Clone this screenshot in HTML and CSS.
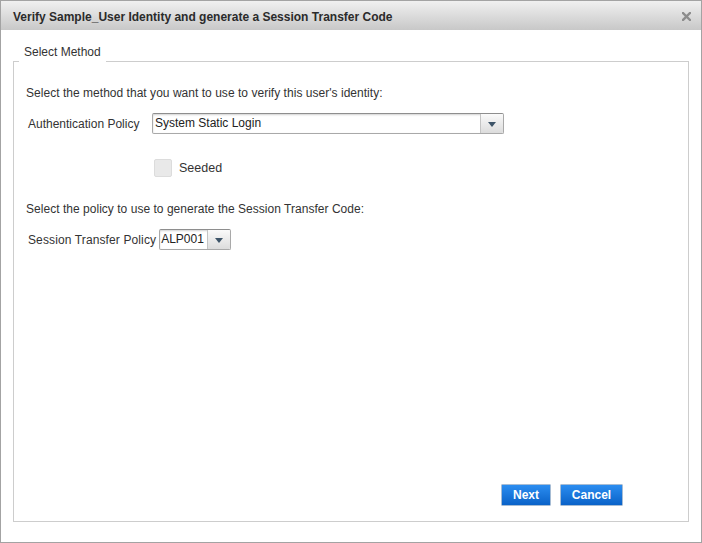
FILE: index.html
```html
<!DOCTYPE html>
<html>
<head>
<meta charset="utf-8">
<link rel="stylesheet" href="styles.css">
</head>
<body>
<div class="dialog">
  <div class="header">
    <span class="title">Verify Sample_User Identity and generate a Session Transfer Code</span>
    <svg class="close" width="9" height="9" viewBox="0 0 9 9"><path d="M1 1L8 8M8 1L1 8" stroke="#8c8c8c" stroke-width="2.4" stroke-linecap="square"/></svg>
  </div>
  <div class="tabs">
    <div class="tab">Select Method</div>
  </div>
  <div class="panel">
    <div class="text">Select the method that you want to use to verify this user's identity:</div>
    <div class="row">
      <span class="label label-wide">Authentication Policy</span>
      <div class="select select-wide">
        <span class="select-value">System Static Login</span>
        <span class="select-btn"><svg width="8" height="5" viewBox="0 0 8 5"><path d="M0 0H8L4 5Z" fill="#3d5468"/></svg></span>
      </div>
    </div>
    <div class="check-row">
      <span class="checkbox"></span>
      <span class="check-label">Seeded</span>
    </div>
    <div class="text text-second">Select the policy to use to generate the Session Transfer Code:</div>
    <div class="row">
      <span class="label label-narrow">Session Transfer Policy</span>
      <div class="select select-small">
        <span class="select-value">ALP001</span>
        <span class="select-btn"><svg width="8" height="5" viewBox="0 0 8 5"><path d="M0 0H8L4 5Z" fill="#3d5468"/></svg></span>
      </div>
    </div>
    <div class="buttons">
      <button class="btn btn-next">Next</button>
      <button class="btn btn-cancel">Cancel</button>
    </div>
  </div>
</div>
</body>
</html>
```
FILE: styles.css
```css
* { box-sizing: border-box; }
html, body { margin: 0; padding: 0; background: #fff; }
body {
  font-family: "Liberation Sans", Arial, sans-serif;
  font-size: 12px;
  color: #333;
}
.dialog {
  width: 702px;
  height: 543px;
  border: 1px solid #a3a3a3;
  display: flex;
  flex-direction: column;
  padding-bottom: 20px;
}
.header {
  height: 29px;
  flex: none;
  display: flex;
  align-items: center;
  justify-content: space-between;
  padding: 0 10px 0 12px;
  background: linear-gradient(#f0f0f0, #c8c8c8);
}
.title {
  font-weight: bold;
  font-size: 12px;
  color: #2b2b2b;
  margin-top: 2px;
}
.close { display: block; margin-top: 1px; }
.tabs {
  flex: none;
  display: flex;
  padding: 12px 12px 0 18px;
}
.tab {
  position: relative;
  height: 20px;
  line-height: 20px;
  padding: 0 5px;
  margin-bottom: -1px;
  background: #fff;
  color: #333;
  z-index: 1;
}
.panel {
  flex: 1;
  margin: 0 12px;
  border: 1px solid #cdcdcd;
  display: flex;
  flex-direction: column;
  padding: 23px 0 15px 12px;
}
.text { line-height: 16px; letter-spacing: 0.03px; }
.text-second { margin-top: 24px; }
.row {
  display: flex;
  align-items: center;
  margin-top: 12px;
  padding-left: 2px;
}
.label { line-height: 16px; }
.label-wide { width: 124px; }
.label-narrow { margin-right: 3px; letter-spacing: 0.12px; }
.select {
  height: 21px;
  display: flex;
  border: 1px solid #a9a9a9;
  border-top-color: #8e8e8e;
  border-radius: 2px;
  background: #fff;
  box-shadow: inset 0 1px 2px rgba(0,0,0,0.18);
  overflow: hidden;
}
.select-wide { width: 352px; }
.select-small { width: 72px; }
.select-value {
  flex: 1;
  line-height: 19px;
  padding-left: 2px;
  color: #222;
  white-space: nowrap;
}
.select-small .select-value { padding-left: 1px; }
.select-btn {
  width: 23px;
  flex: none;
  display: flex;
  align-items: center;
  justify-content: center;
  border-left: 1px solid #c4c4c4;
  background: linear-gradient(#fafafa, #dcdcdc);
}
.select-btn svg { display: block; margin-top: 1px; }
.check-row {
  display: flex;
  align-items: center;
  margin-top: 25px;
  padding-left: 128px;
}
.checkbox {
  width: 18px;
  height: 18px;
  background: #e9e9e9;
  border: 1px solid #dcdcdc;
  border-radius: 2px;
}
.check-label {
  margin-left: 7px;
  margin-top: -1px;
  font-size: 12.5px;
  color: #333;
}
.buttons {
  margin-top: auto;
  display: flex;
  justify-content: flex-end;
  gap: 9px;
  padding-right: 65px;
}
.btn {
  height: 22px;
  padding: 0;
  border: 1px solid #a6bcd4;
  border-radius: 1px;
  background: linear-gradient(#2b8df0, #0a62c8);
  color: #fff;
  font-family: "Liberation Sans", Arial, sans-serif;
  font-weight: bold;
  font-size: 12px;
}
.btn-next { width: 50px; }
.btn-cancel { width: 63px; }
```
